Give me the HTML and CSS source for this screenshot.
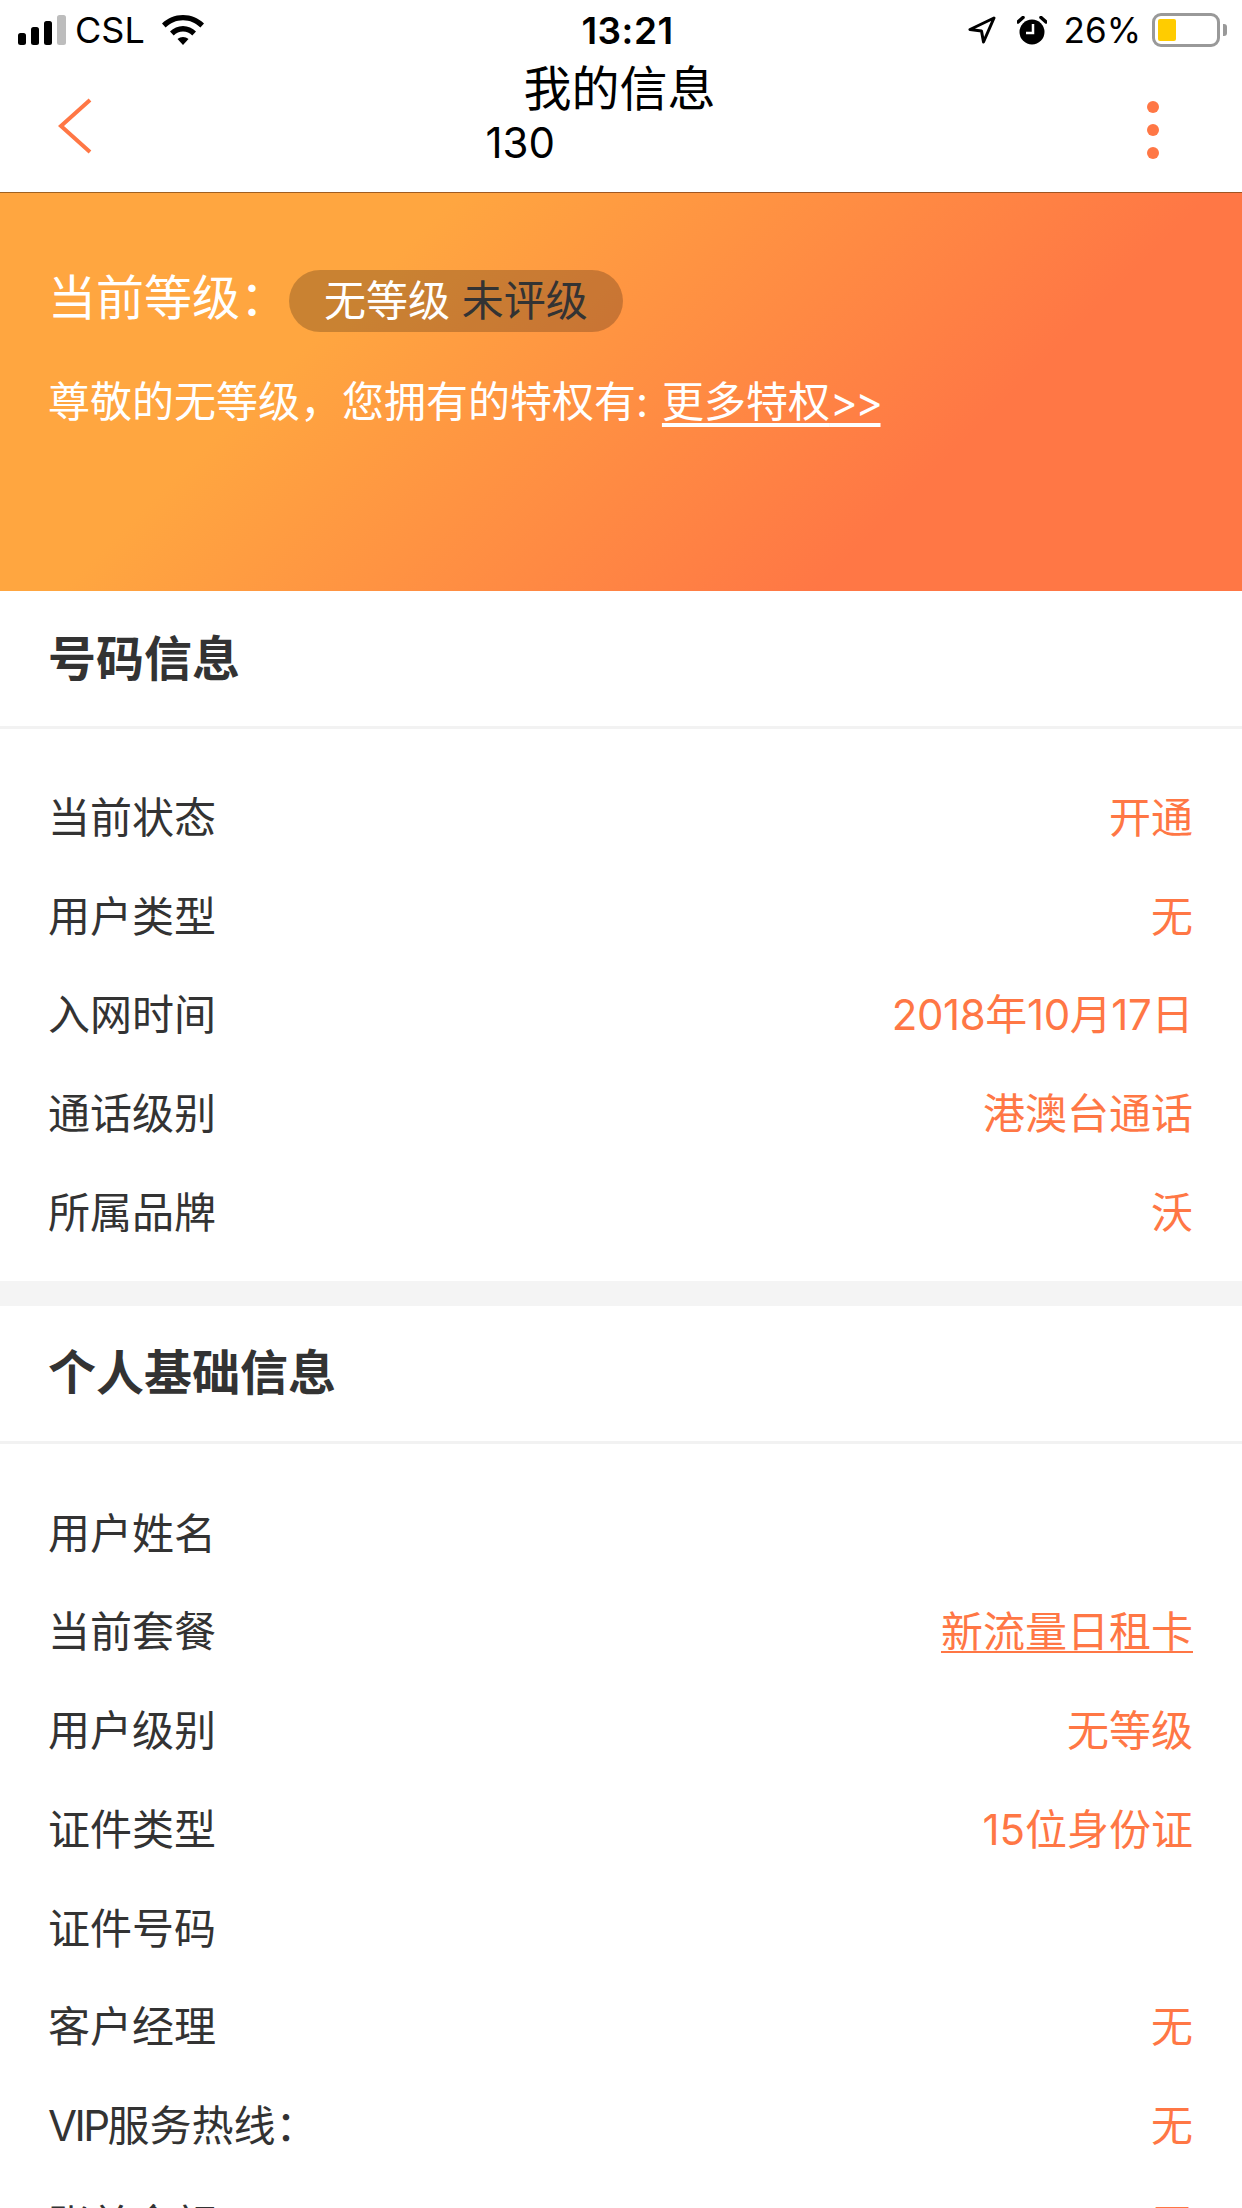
FILE: index.html
```html
<!DOCTYPE html>
<html lang="zh-CN">
  <head>
    <meta charset="UTF-8" />
    <meta name="viewport" content="width=device-width, initial-scale=1.0" />
    <title>我的信息</title>
    <link rel="stylesheet" href="styles.css">
  </head>
  <body>
    <div class="status-bar">
      <div class="status-left">
        <svg class="signal" width="48" height="30" viewBox="0 0 48 30">
          <rect x="0" y="18" width="8" height="12" rx="2.5" fill="#000" />
          <rect x="13" y="12" width="8" height="18" rx="2.5" fill="#000" />
          <rect x="26" y="6" width="8" height="24" rx="2.5" fill="#000" />
          <rect x="39" y="0" width="9" height="30" rx="2.5" fill="#bdbdbd" />
        </svg>
        <span class="carrier">CSL</span>
        <svg class="wifi" width="42" height="30" viewBox="0 0 42 30">
          <path d="M0 8.500C5.500 3.200 12.800 0 21 0s15.500 3.200 21 8.500l-3.600 4C33.800 8 27.800 5.200 21 5.200S8.200 8 3.600 12.500z" fill="#000" />
          <path d="M8 16.500C11.500 13.200 16 11 21 11s9.500 2.200 13 5.500l-3.700 4C27.800 18.200 24.500 16.600 21 16.600s-6.800 1.600-9.300 3.900z" fill="#000" />
          <path d="M15.500 24C17 22.700 19 21.900 21 21.900s4 .8 5.500 2.100L21 30z" fill="#000" />
        </svg>
      </div>
      <div class="status-time">13:21</div>
      <div class="status-right">
        <svg class="arrow" width="28" height="28" viewBox="0 0 28 28">
          <path d="M26 2 2 13.500l11.500 1.500L15.500 26z" fill="none" stroke="#000" stroke-width="3" stroke-linejoin="round" />
        </svg>
        <svg class="alarm" width="30" height="29" viewBox="0 0 30 29">
          <circle cx="15" cy="16" r="12.500" fill="#000" />
          <path d="M1 6 6 1.500M29 6 24 1.500" stroke="#000" stroke-width="3.500" stroke-linecap="round" />
          <path d="M16 8v9H9" fill="none" stroke="#fff" stroke-width="2.500" />
        </svg>
        <span class="percent">26%</span>
        <div class="battery"><div class="battery-level"></div></div>
        <div class="battery-tip"></div>
      </div>
    </div>

    <div class="nav">
      <svg class="nav-back" width="34" height="56" viewBox="0 0 34 56">
        <path d="M32 2 3 28l29 26" fill="none" stroke="#ff7745" stroke-width="4" />
      </svg>
      <div class="nav-title">
        <div class="nav-name">我的信息</div>
        <div class="nav-number">130</div>
      </div>
      <div class="nav-more"><i></i><i></i><i></i></div>
    </div>

    <div class="banner">
      <div class="level-line">
        <span class="level-label">当前等级：</span>
        <span class="level-badge">无等级 <span class="level-dark">未评级</span></span>
      </div>
      <div class="privilege-line">尊敬的无等级，您拥有的特权有: <a class="privilege-link">更多特权<span class="tight">&gt;&gt;</span></a></div>
    </div>

    <div class="section">
      <div class="section-title">号码信息</div>
      <div class="rows">
        <div class="row"><span>当前状态</span><span class="value">开通</span></div>
        <div class="row"><span>用户类型</span><span class="value">无</span></div>
        <div class="row"><span>入网时间</span><span class="value digits">2018年10月17日</span></div>
        <div class="row"><span>通话级别</span><span class="value">港澳台通话</span></div>
        <div class="row"><span>所属品牌</span><span class="value">沃</span></div>
      </div>
    </div>

    <div class="section section-second">
      <div class="section-title">个人基础信息</div>
      <div class="rows">
        <div class="row"><span>用户姓名</span><span class="value"></span></div>
        <div class="row"><span>当前套餐</span><span class="value underline">新流量日租卡</span></div>
        <div class="row"><span>用户级别</span><span class="value">无等级</span></div>
        <div class="row"><span>证件类型</span><span class="value">15位身份证</span></div>
        <div class="row"><span>证件号码</span><span class="value"></span></div>
        <div class="row"><span>客户经理</span><span class="value">无</span></div>
        <div class="row"><span><span class="tight">VIP</span>服务热线：</span><span class="value">无</span></div>
        <div class="row"><span>账单余额</span><span class="value">无</span></div>
      </div>
    </div>
  </body>
</html>
```

FILE: styles.css
```css
html,
body {
  margin: 0;
  height: 2208px;
  overflow: hidden;
}
body {
  font-family: Inter, "Noto Sans CJK SC", sans-serif;
  background-color: #fff;
  color: #333;
}

.status-bar {
  height: 60px;
  display: flex;
  align-items: center;
  padding: 0 15px 0 18px;
  color: #000;
  font-size: 36px;
}
.status-left,
.status-right {
  flex: 1;
  display: flex;
  align-items: center;
}
.status-right {
  justify-content: flex-end;
}
.carrier {
  margin-left: 9px;
  width: 64px;
}
.wifi {
  margin-left: 23px;
}
.status-time {
  font-weight: 600;
  font-size: 37px;
  letter-spacing: 0.5px;
  margin-left: 10px;
}
.arrow {
  margin-right: 21px;
}
.percent {
  margin-left: 17px;
  margin-right: 11px;
  font-size: 35px;
}
.battery {
  width: 68px;
  height: 34px;
  box-sizing: border-box;
  border: 3px solid #999;
  border-radius: 9px;
  padding: 3px;
}
.battery-level {
  width: 18px;
  height: 100%;
  background-color: #fc0;
  border-radius: 2px;
}
.battery-tip {
  width: 4px;
  height: 12px;
  margin-left: 3px;
  background-color: #999;
  border-radius: 0 3px 3px 0;
}

.nav {
  height: 132px;
  display: flex;
  align-items: flex-start;
  justify-content: space-between;
  padding: 0 83px 0 58px;
}
.nav-back {
  margin-top: 38px;
}
.nav-title {
  width: 268px;
  color: #000;
}
.nav-name {
  font-size: 48px;
  line-height: 58px;
  text-align: center;
}
.nav-number {
  font-size: 42px;
  line-height: 50px;
}
.nav-more {
  margin-top: 41px;
  display: flex;
  flex-direction: column;
  gap: 11px;
}
.nav-more i {
  display: block;
  width: 12px;
  height: 12px;
  border-radius: 50%;
  background-color: #ff7745;
}

.banner {
  height: 399px;
  box-sizing: border-box;
  padding: 77px 48px 0;
  border-top: 1px solid rgba(120, 70, 20, 0.7);
  background: linear-gradient(135deg, #ffa640 28%, #ff7745 74%);
  color: #fff;
}
.level-line {
  display: flex;
  align-items: center;
  height: 62px;
}
.level-label {
  font-size: 48px;
  width: 241px;
  padding-bottom: 14px;
  white-space: nowrap;
}
.level-badge {
  height: 62px;
  line-height: 62px;
  padding: 0 35px;
  border-radius: 31px;
  background-color: rgba(0, 0, 0, 0.21);
  font-size: 42px;
  white-space: nowrap;
}
.level-dark {
  color: #333;
}
.privilege-line {
  margin-top: 40px;
  font-size: 42px;
  line-height: 60px;
}
.privilege-link {
  margin-left: 2px;
  text-decoration: underline;
  text-underline-offset: 6px;
}
.tight {
  letter-spacing: -2.5px;
}

.section-title {
  height: 138px;
  box-sizing: border-box;
  padding: 0 48px 8px;
  display: flex;
  align-items: center;
  font-size: 48px;
  font-weight: 700;
  border-bottom: 3px solid #f2f2f2;
}
.rows {
  padding: 40px 0 18px;
}
.section-second .rows {
  padding-top: 41px;
}
.row {
  height: 98.75px;
  box-sizing: border-box;
  display: flex;
  align-items: center;
  justify-content: space-between;
  padding: 0 49px 8px 48px;
  font-size: 42px;
}
.value {
  color: #ff7745;
}
.digits {
  letter-spacing: -0.4px;
}
.underline {
  text-decoration: underline;
  text-decoration-thickness: 2px;
  text-underline-offset: 4px;
}
.section-second {
  border-top: 25px solid #f4f4f4;
}
```
